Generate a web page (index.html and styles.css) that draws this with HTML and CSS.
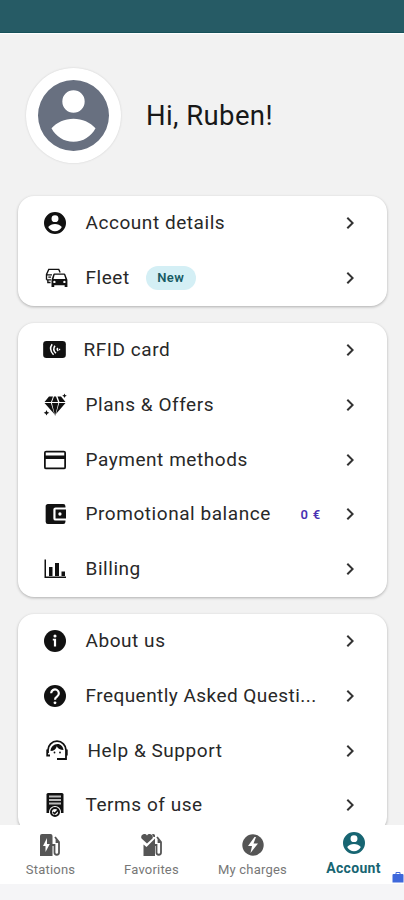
FILE: index.html
```
<!DOCTYPE html>
<html lang="en">
<head>
<meta charset="utf-8">
<title>Account</title>
<link rel="stylesheet" href="styles.css">
</head>
<body>
<svg class="defs" width="0" height="0">
  <symbol id="chevron" viewBox="0 0 24 24"><path d="M8.6 16.6 13.2 12 8.6 7.4 10 6l6 6-6 6z"/></symbol>
  <symbol id="user" viewBox="2 2 20 20"><path fill-rule="evenodd" d="M12 2a10 10 0 1 0 0 20 10 10 0 0 0 0-20zm0 2.900a3.150 3.150 0 1 1 0 6.300 3.150 3.150 0 0 1 0-6.300zM12 12.900c2.500 0 4.700 1 6.200 2.700C17 17.900 14.700 19.400 12 19.400s-5-1.500-6.200-3.800C7.300 13.900 9.500 12.900 12 12.900z"/></symbol>
</svg>
<div class="phone">
  <header class="statusbar"></header>
  <main class="content">
    <section class="profile">
      <div class="avatar"><svg><use href="#user"/></svg></div>
      <h1>Hi, Ruben!</h1>
    </section>
    <section class="card">
      <a class="row"><svg class="icon" viewBox="2 2 20 20"><use href="#user" x="2" y="2" width="20" height="20"/></svg><span class="label">Account details</span><svg class="chevron"><use href="#chevron"/></svg></a>
      <a class="row"><svg class="icon fleet" viewBox="0 0 24 22"><path d="M1 13V7l2.500-5.500h11L16 5M1 7.500h6M1 13h5M2.500 13v3h3M3 10h3" fill="none" stroke="#111" stroke-width="1.500"/><path fill-rule="evenodd" d="M9.500 6h11c.6 0 1 .4 1.200.9L24 13v8h-3v-2H9.500v2h-3v-8l2-6.100c.2-.5.500-.9 1-.9zM10 7.500 8.700 12h13.100l-1.500-4.500zM9.700 14a1.300 1.300 0 1 0 0 2.600 1.300 1.300 0 0 0 0-2.600zm11 0a1.300 1.300 0 1 0 0 2.600 1.300 1.300 0 0 0 0-2.600z"/></svg><span class="label">Fleet</span><span class="badge">New</span><svg class="chevron"><use href="#chevron"/></svg></a>
    </section>
    <section class="card">
      <a class="row rfid"><svg class="icon" viewBox="0 0 24 18"><rect width="24" height="18" rx="3.500"/><path d="M9.500 3.500q-4 5.500 1.500 11M12.500 5q-3 4 1 8M15.500 7.500q-1.500 1.500.500 3" fill="none" stroke="#fff" stroke-width="1.600"/><path d="M16.500 9h1.500" stroke="#fff" stroke-width="1.500"/></svg><span class="label">RFID card</span><svg class="chevron"><use href="#chevron"/></svg></a>
      <a class="row"><svg class="icon" viewBox="0 0 22 22"><path d="M5 2.500h4L7 8H.5zM10 2.500h2l2 5.500H8zM13.500 2.500H17l4.500 5.500h-6zM.5 8.900h6.400l3.400 11zM7.900 8.900h6.400L11.100 22zM15.200 8.900h6.300l-9.500 11z"/><path d="m20.500-.5.700 1.600 1.600.7-1.600.7-.7 1.600-.7-1.600-1.600-.7 1.600-.7zM2.500 16l.9 1.900 1.900.9-1.900.9-.9 1.900-.9-1.900-1.900-.9 1.900-.9z"/></svg><span class="label">Plans &amp; Offers</span><svg class="chevron"><use href="#chevron"/></svg></a>
      <a class="row"><svg class="icon" viewBox="2 2 20 20"><path fill-rule="evenodd" d="M20 3.500H4a2 2 0 0 0-2 2v13a2 2 0 0 0 2 2h16a2 2 0 0 0 2-2v-13a2 2 0 0 0-2-2zM3.600 5.100h16.800v2.800H3.600zM3.600 11h16.800v7.900H3.600z"/></svg><span class="label">Payment methods</span><svg class="chevron"><use href="#chevron"/></svg></a>
      <a class="row"><svg class="icon" viewBox="1.500 2 20 20"><path fill-rule="evenodd" d="M21 18v1a2 2 0 0 1-2 2H5a2 2 0 0 1-2-2V5c0-1.100.9-2 2-2h14a2 2 0 0 1 2 2v1h-9a2 2 0 0 0-2 2v8a2 2 0 0 0 2 2zm-9-2h9.500V8H12zm4-5.500a1.500 1.500 0 1 1 0 3 1.500 1.500 0 0 1 0-3z"/></svg><span class="label">Promotional balance</span><span class="amount">0 €</span><svg class="chevron"><use href="#chevron"/></svg></a>
      <a class="row"><svg class="icon" viewBox="0 0 22 22"><path d="M.5 1.500H2v17h20V20H.5zM5 9h3.500v9H5zM11 5h4v13h-4zM17.500 13.500H21V18h-3.500z"/></svg><span class="label">Billing</span><svg class="chevron"><use href="#chevron"/></svg></a>
    </section>
    <section class="card">
      <a class="row"><svg class="icon" viewBox="2 2 20 20"><circle cx="12" cy="12" r="10"/><circle cx="12" cy="7.500" r="1.400" fill="#fff"/><path d="M10 10h3v7h-2v-5.500h-1z" fill="#fff"/></svg><span class="label">About us</span><svg class="chevron"><use href="#chevron"/></svg></a>
      <a class="row"><svg class="icon" viewBox="2 2 20 20"><circle cx="12" cy="12" r="10"/><path d="M8.500 9.500a3.500 3.500 0 1 1 5.500 2.900c-1.300.9-2 1.300-2 2.900" fill="none" stroke="#fff" stroke-width="2"/><circle cx="12" cy="18.200" r="1.300" fill="#fff"/></svg><span class="label faq">Frequently Asked Questi...</span><svg class="chevron"><use href="#chevron"/></svg></a>
      <a class="row help"><svg class="icon" viewBox="0 0 22 22"><path d="M2 13V10a9 8.800 0 0 1 18 0v9h-9M1.200 9.500v6H4M20.800 9.500v6" fill="none" stroke="#111" stroke-width="1.800"/><path d="M4.500 11c.2-4 3.300-7 7-7 3.300 0 5.500 2.500 6 6-3.200 0-5.500-1.300-6.700-3.800C10 9 8 11 4.500 11z"/><circle cx="8.500" cy="12.500" r=".9"/><circle cx="14" cy="12.500" r=".9"/></svg><span class="label">Help &amp; Support</span><svg class="chevron"><use href="#chevron"/></svg></a>
      <a class="row terms"><svg class="icon" viewBox="0 0 22 24"><path d="M4 0h14a1.500 1.500 0 0 1 1.500 1.500V20H2.500V1.500A1.500 1.500 0 0 1 4 0z"/><path d="M5 3.500h12M5 7h12M5 10.500h12" stroke="#bbb" stroke-width="2"/><circle cx="11" cy="19" r="6" fill="#fff"/><circle cx="11" cy="19" r="4" fill="none" stroke="#111" stroke-width="2"/><path d="m9 19 1.600 1.600 4-4" fill="none" stroke="#111" stroke-width="1.600"/></svg><span class="label">Terms of use</span><svg class="chevron"><use href="#chevron"/></svg></a>
    </section>
  </main>
  <nav class="tabs">
    <a class="tab"><svg viewBox="0 0 22 22"><path d="M2 0h8.500a2 2 0 0 1 2 2v20H0V2a2 2 0 0 1 2-2z"/><path d="M7 4 3 12h2.500v6l4.300-8H7z" fill="#fff"/><path d="M12 11h2.500v7.500a2.200 2.200 0 0 0 4.500 0V8l-4-5M19 8h-2.500V5" fill="none" stroke="#555" stroke-width="1.800"/></svg><span>Stations</span></a>
    <a class="tab"><svg viewBox="0 0 22 22"><path d="M2.500 10.500 5.500 13 14 4.500V22H2.500zM6 9.500.8 4.800A3 3 0 0 1 6 1.500a3 3 0 0 1 5.200 3.300zM11 0h1.500A1.500 1.500 0 0 1 14 1.500V3h-1.500z"/><path d="M14 11h1.500v7.500a2.200 2.200 0 0 0 4.500 0V8l-4-5M20 8h-2.500V5" fill="none" stroke="#555" stroke-width="1.800"/></svg><span>Favorites</span></a>
    <a class="tab"><svg viewBox="0 0 22 22"><circle cx="11" cy="11" r="10.700"/><path d="M12.500 3 6 12h4l-1.500 7L16 9.500h-4.500L14 3z" fill="#fff"/></svg><span>My charges</span></a>
    <a class="tab active"><svg><use href="#user"/></svg><span>Account</span></a>
    <svg class="case" viewBox="0 0 11 11"><path d="M3 2V1a1 1 0 0 1 1-1h3a1 1 0 0 1 1 1v1h2a1 1 0 0 1 1 1v7.500H0V3a1 1 0 0 1 1-1zm1 0h3V1H4z"/></svg>
  </nav>
</div>
</body>
</html>
```
FILE: styles.css
```
* { box-sizing: border-box; }
body { margin: 0; font-family: Roboto, "Liberation Sans", sans-serif; color: #181818; background: #f2f2f2; }
.defs { position: absolute; }
.phone { height: 900px; display: flex; flex-direction: column; overflow: hidden; }
.statusbar { height: 33px; flex: none; background: #265b65; border-bottom: 1px solid #17515a; box-shadow: 0 1px 1px #fff; }
.content { flex: 1; min-height: 0; overflow: hidden; padding: 34px 17px 0 18px; }
.profile { display: flex; align-items: center; height: 96px; margin: 0 0 33px 8px; }
.avatar { width: 95px; height: 95px; border-radius: 50%; background: #fff; display: grid; place-items: center; box-shadow: 0 0 2px #ccc; }
.avatar svg { width: 71px; height: 71px; fill: #687080; }
h1 { margin: 2px 0 0 25px; font-size: 27.500px; font-weight: 400; line-height: 34px; letter-spacing: 0.400px; }
.card { background: #fff; border-radius: 16px; margin-bottom: 17px; box-shadow: 0 1px 3px rgba(0,0,0,.28); }
.row { display: flex; align-items: center; height: 54.800px; padding: 0 25px 0 26px; }
.card:first-of-type, .card + .card { margin-top: 0; }
.icon { width: 22px; height: 22px; margin-right: 19.500px; fill: #111; flex: none; overflow: visible; }
.fleet { width: 25px; height: 20px; margin-right: 16.500px; }
.rfid .icon { width: 23px; height: 17px; margin: 0 17.500px 0 -1px; }
.help .icon { margin-left: 2px; }
.terms .icon { width: 22px; height: 24px; }
.label { font-size: 19px; line-height: 24px; letter-spacing: 0.550px; white-space: nowrap; color: #282828; }
.faq { letter-spacing: 0.450px; }
.badge { margin-left: 16px; width: 50px; height: 24px; border-radius: 12px; background: #d4eff5; color: #175b64; font-size: 13px; font-weight: 600; line-height: 24px; text-align: center; letter-spacing: .4px; }
.chevron { width: 24px; height: 24px; margin-left: auto; fill: #333; flex: none; }
.amount { margin-left: auto; margin-right: 17px; color: #4930b3; font-size: 13px; font-weight: 600; letter-spacing: .8px; }
.amount + .chevron { margin-left: 0; }
.tabs { flex: none; position: relative; height: 75px; background: #fff; border-bottom: 16px solid #f5f5f7; display: grid; grid-template-columns: repeat(4, 101px); }
.tab { display: flex; flex-direction: column; align-items: center; padding-top: 9px; color: #777; font-size: 13px; line-height: 16px; letter-spacing: .2px; }
.tab svg { width: 22px; height: 22px; margin-bottom: 6px; fill: #555; }
.tab.active { padding-top: 7px; color: #176572; font-size: 14px; font-weight: 700; letter-spacing: .3px; }
.tab.active svg { fill: #176572; }
.tabs .case { position: absolute; left: 392px; top: 47px; width: 12px; height: 11px; fill: #3e68db; }
```
